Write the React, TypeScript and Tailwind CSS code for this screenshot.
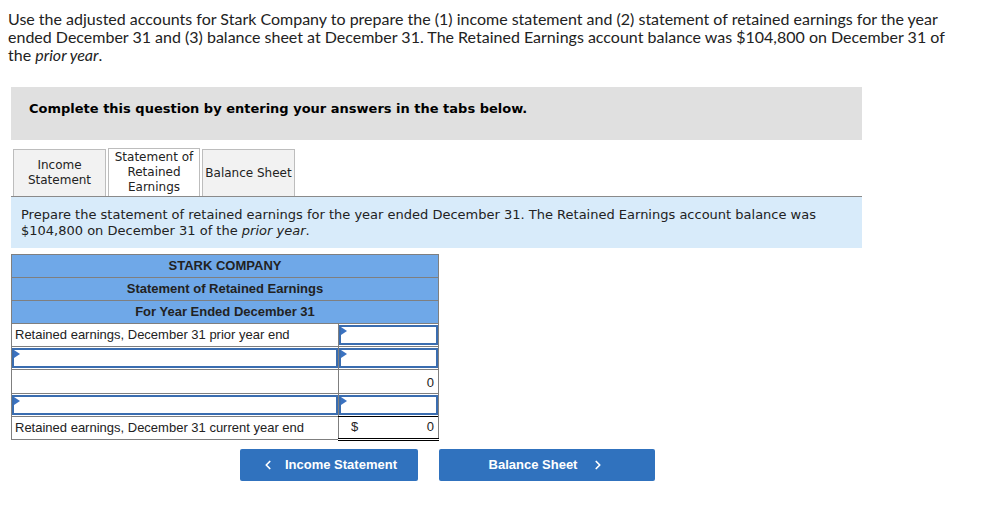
import { ChevronLeft, ChevronRight } from 'lucide-react';

const verdana = { fontFamily: '"DejaVu Sans", Verdana, sans-serif' };

function Marker() {
  return (
    <span className="absolute left-0 top-0 w-0 h-0 border-y-[4px] border-y-transparent border-l-[6px] border-l-[#3b72c0]" />
  );
}

function InputCell({ className = '' }: { className?: string }) {
  return (
    <td className={`border border-[#7f7f7f] p-0 h-[23px] ${className}`}>
      <div className="relative h-[20px] border-2 border-[#3a6db0] bg-white">
        <Marker />
      </div>
    </td>
  );
}

export default function App() {
  return (
    <div className="w-[1000px] h-[525px] bg-white text-[#222] relative">
      <p
        className="absolute left-[8px] top-[10px] w-[980px] text-[16px] leading-[18px] text-[#222]"
        style={{ fontFamily: 'Lato, "Open Sans", sans-serif' }}
      >
        Use the adjusted accounts for Stark Company to prepare the (1) income statement and (2) statement of retained earnings for the year
        <br />
        ended December 31 and (3) balance sheet at December 31. The Retained Earnings account balance was $104,800 on December 31 of
        <br />
        the <i>prior year</i>.
      </p>

      <div className="absolute left-[11px] top-[87px] w-[851px]">
        <div className="h-[53px] bg-[#e0e0e0] pl-[18px] pt-[9px]" style={verdana}>
          <span className="text-[13px] leading-[16px] font-bold text-black">
            Complete this question by entering your answers in the tabs below.
          </span>
        </div>

        <div className="mt-[8px] flex items-end gap-[2px] pl-[2px]" style={verdana}>
          <div className="w-[93px] h-[47px] bg-[#f2f2f2] border border-[#bdbdbd] border-b-0 flex items-center justify-center text-center text-[12px] leading-[15px] text-[#222]">
            Income
            <br />
            Statement
          </div>
          <div className="w-[92px] h-[48px] bg-white border border-[#bdbdbd] border-b-0 flex items-center justify-center text-center text-[12px] leading-[15px] text-[#222]">
            Statement of
            <br />
            Retained
            <br />
            Earnings
          </div>
          <div className="w-[93px] h-[47px] bg-[#f2f2f2] border border-[#bdbdbd] border-b-0 flex items-center justify-center text-center text-[12px] leading-[15px] text-[#222]">
            Balance Sheet
          </div>
        </div>

        <div className="bg-[#d8ebfa] border-t border-[#8a8a8a] h-[52px] px-[10px] pt-[10px] text-[13px] leading-[16px] text-[#222]" style={verdana}>
          Prepare the statement of retained earnings for the year ended December 31. The Retained Earnings account balance was
          <br />
          $104,800 on December 31 of the <i>prior year</i>.
        </div>

        <table
          className="mt-[6px] border-collapse w-[428px] text-[13px] text-[#222]"
          style={{ fontFamily: '"Liberation Sans", Arial, sans-serif' }}
        >
          <tbody>
            {['STARK COMPANY', 'Statement of Retained Earnings', 'For Year Ended December 31'].map((t) => (
              <tr key={t}>
                <td colSpan={2} className="h-[23px] border border-[#7f7f7f] bg-[#6fa8e8] text-center font-bold p-0">
                  {t}
                </td>
              </tr>
            ))}
            <tr>
              <td className="w-[327px] h-[23px] border border-[#7f7f7f] p-0 pl-[3px]">
                Retained earnings, December 31 prior year end
              </td>
              <InputCell className="w-[100px]" />
            </tr>
            <tr>
              <InputCell />
              <InputCell />
            </tr>
            <tr>
              <td className="h-[23px] border border-[#7f7f7f] p-0" />
              <td className="h-[23px] border border-[#7f7f7f] border-t-black p-0 text-right pr-[4px] pt-[3px]">0</td>
            </tr>
            <tr>
              <InputCell />
              <InputCell />
            </tr>
            <tr>
              <td className="h-[23px] border border-[#7f7f7f] p-0 pl-[3px]">Retained earnings, December 31 current year end</td>
              <td className="h-[23px] border border-[#7f7f7f] border-t-black border-b-[3px] border-b-black border-double p-0 pr-[4px]">
                <div className="flex justify-between pl-[12px]">
                  <span>$</span>
                  <span>0</span>
                </div>
              </td>
            </tr>
          </tbody>
        </table>

        <div className="mt-[8px] flex gap-[21px] pl-[229px]" style={{ fontFamily: '"Liberation Sans", Arial, sans-serif' }}>
          <button className="w-[178px] h-[32px] bg-[#3072be] rounded-[2px] text-white font-bold text-[13px] flex items-center justify-center gap-[10px]">
            <ChevronLeft size={14} strokeWidth={3} />
            Income Statement
          </button>
          <button className="w-[216px] h-[32px] bg-[#3072be] rounded-[2px] text-white font-bold text-[13px] flex items-center justify-center gap-[14px]">
            Balance Sheet
            <ChevronRight size={14} strokeWidth={3} />
          </button>
        </div>
      </div>
    </div>
  );
}
